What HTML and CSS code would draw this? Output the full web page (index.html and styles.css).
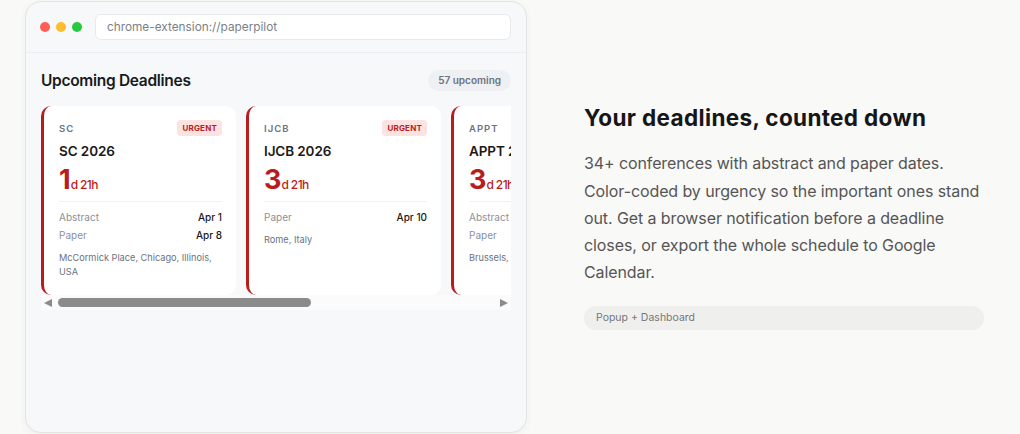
FILE: index.html
```html
<!DOCTYPE html>
<html lang="en">
<head>
<meta charset="utf-8">
<title>PaperPilot</title>
<link rel="stylesheet" href="styles.css">
</head>
<body>
<main class="page">
  <section class="window">
    <div class="topbar">
      <div class="dots">
        <span class="dot red"></span>
        <span class="dot yellow"></span>
        <span class="dot green"></span>
      </div>
      <div class="url">chrome-extension://paperpilot</div>
    </div>
    <div class="content">
      <div class="list-head">
        <h2 class="list-title">Upcoming Deadlines</h2>
        <span class="count">57 upcoming</span>
      </div>
      <div class="cards">
        <article class="card">
          <div class="card-head"><span class="acr">SC</span><span class="urgent">URGENT</span></div>
          <h3 class="card-title">SC 2026</h3>
          <div class="countdown"><span class="num">1</span><span class="unit">d 21h</span></div>
          <div class="rows">
            <div class="row"><span class="label">Abstract</span><span class="val">Apr 1</span></div>
            <div class="row"><span class="label">Paper</span><span class="val">Apr 8</span></div>
          </div>
          <p class="loc">McCormick Place, Chicago, Illinois, USA</p>
        </article>
        <article class="card">
          <div class="card-head"><span class="acr">IJCB</span><span class="urgent">URGENT</span></div>
          <h3 class="card-title">IJCB 2026</h3>
          <div class="countdown"><span class="num">3</span><span class="unit">d 21h</span></div>
          <div class="rows">
            <div class="row"><span class="label">Paper</span><span class="val">Apr 10</span></div>
          </div>
          <p class="loc">Rome, Italy</p>
        </article>
        <article class="card">
          <div class="card-head"><span class="acr">APPT</span><span class="urgent">URGENT</span></div>
          <h3 class="card-title">APPT 2026</h3>
          <div class="countdown"><span class="num">3</span><span class="unit">d 21h</span></div>
          <div class="rows">
            <div class="row"><span class="label">Abstract</span><span class="val">Apr 3</span></div>
            <div class="row"><span class="label">Paper</span><span class="val">Apr 10</span></div>
          </div>
          <p class="loc">Brussels, Belgium</p>
        </article>
      </div>
      <div class="scrollbar" aria-hidden="true">
        <span class="arrow left"></span>
        <span class="thumb"></span>
        <span class="arrow right"></span>
      </div>
    </div>
  </section>
  <section class="info">
    <h1 class="info-title">Your deadlines, counted down</h1>
    <p class="info-text">34+ conferences with abstract and paper dates. Color-coded by urgency so the important ones stand out. Get a browser notification before a deadline closes, or export the whole schedule to Google Calendar.</p>
    <div class="pill">Popup + Dashboard</div>
  </section>
</main>
</body>
</html>
```

FILE: styles.css
```css
* { box-sizing: border-box; }
html, body { margin: 0; padding: 0; }
body {
  background: #f9f9f8;
  font-family: Inter, "Liberation Sans", sans-serif;
  color: #1a1a1a;
  width: 1020px;
  height: 434px;
  overflow: hidden;
}
.page {
  display: flex;
  align-items: center;
  height: 434px;
  padding-left: 25px;
}
.window {
  width: 502px;
  height: 432px;
  margin-top: 1px;
  background: #f7f8fa;
  border: 1px solid #e4e4e4;
  border-radius: 16px;
  box-shadow: 0 2px 8px rgba(0,0,0,0.05);
  overflow: hidden;
  flex-shrink: 0;
  align-self: flex-start;
}
.topbar {
  height: 51px;
  display: flex;
  align-items: center;
  gap: 13px;
  padding: 0 15px 0 14px;
  border-bottom: 1px solid #eceef1;
}
.dots { display: flex; gap: 6px; }
.dot { width: 10px; height: 10px; border-radius: 50%; display: block; }
.dot.red { background: #ff5f57; }
.dot.yellow { background: #febc2e; }
.dot.green { background: #28c840; }
.url {
  flex: 1;
  height: 26px;
  background: #fff;
  border: 1px solid #e8e9ec;
  border-radius: 6px;
  display: flex;
  align-items: center;
  padding-left: 11px;
  font-size: 11.8px;
  color: #7a7f88;
}
.content { padding: 17px 15px 0 15px; }
.list-head {
  display: flex;
  align-items: center;
  justify-content: space-between;
  height: 21px;
  margin-bottom: 15px;
}
.list-title {
  margin: 0;
  font-size: 15.5px;
  font-weight: 600;
  letter-spacing: -0.3px;
  color: #1a1a1a;
}
.count {
  background: #eef0f3;
  color: #6b7280;
  font-size: 10px;
  font-weight: 600;
  height: 21px;
  line-height: 21px;
  padding: 0 10px;
  border-radius: 11px;
}
.cards {
  display: flex;
  gap: 10px;
  overflow: hidden;
  width: 470px;
}
.card {
  flex: 0 0 195px;
  height: 189px;
  background: #fff;
  border-left: 3px solid #b91c1c;
  border-radius: 10px;
  padding: 14px 14px 0 15px;
}
.card-head {
  display: flex;
  justify-content: space-between;
  align-items: center;
  height: 16px;
}
.acr {
  font-size: 9.5px;
  font-weight: 600;
  letter-spacing: 1px;
  color: #6b7280;
}
.urgent {
  background: #fde2e2;
  color: #b91c1c;
  font-size: 8px;
  font-weight: 700;
  height: 16px;
  line-height: 16px;
  padding: 0 5px;
  border-radius: 4px;
  letter-spacing: 0.2px;
}
.card-title {
  margin: 5px 0 0 0;
  font-size: 13.5px;
  line-height: 20px;
  font-weight: 600;
  white-space: nowrap;
  letter-spacing: -0.1px;
}
.countdown {
  margin-top: 5px;
  height: 28px;
  display: flex;
  align-items: baseline;
  color: #b91c1c;
  border-bottom: 1px solid #f0f1f3;
  box-sizing: content-box;
  padding-bottom: 7px;
}
.num {
  font-size: 27px;
  font-weight: 700;
  line-height: 28px;
  letter-spacing: -1px;
}
.unit {
  font-size: 12px;
  font-weight: 500;
  letter-spacing: -0.6px;
  margin-left: 1px;
}
.rows { padding-top: 6px; }
.row {
  display: flex;
  justify-content: space-between;
  font-size: 10px;
  line-height: 18px;
  white-space: nowrap;
}
.label { color: #8b909a; }
.val { color: #1a1a1a; font-weight: 500; }
.loc {
  margin: 7px 0 0 0;
  font-size: 9.2px;
  line-height: 14px;
  color: #6b7280;
  white-space: normal;
}
.scrollbar {
  width: 470px;
  height: 15px;
  background: #fbfbfc;
  display: flex;
  align-items: center;
  padding: 0 3px 0 3px;
}
.arrow {
  width: 0;
  height: 0;
  border-top: 4.5px solid transparent;
  border-bottom: 4.5px solid transparent;
}
.arrow.left { border-right: 8px solid #8b8b8b; }
.arrow.right { border-left: 8px solid #8b8b8b; margin-left: auto; }
.thumb {
  width: 253px;
  height: 9px;
  border-radius: 5px;
  background: #8b8b8b;
  margin-left: 6px;
}
.info {
  margin-left: 57px;
  width: 402px;
}
.info-title {
  margin: 0;
  font-size: 22.5px;
  font-weight: 700;
  letter-spacing: 0.35px;
  color: #161616;
  line-height: 28px;
}
.info-text {
  margin: 18px 0 0 0;
  font-size: 16px;
  line-height: 27.2px;
  color: #555;
  letter-spacing: -0.1px;
}
.pill {
  margin-top: 19px;
  height: 24px;
  line-height: 24px;
  background: #efefee;
  border-radius: 12px;
  padding-left: 12px;
  font-size: 10.5px;
  color: #777;
  width: 400px;
}
```
